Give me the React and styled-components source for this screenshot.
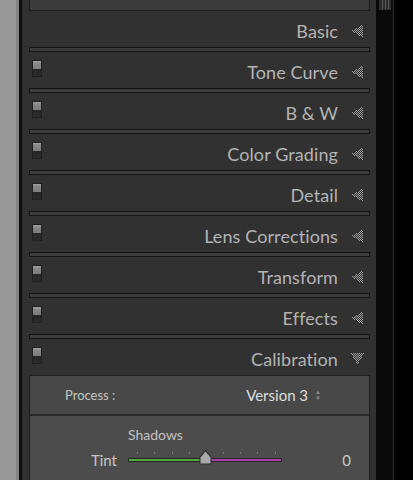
import React from 'react';
import styled, { createGlobalStyle } from 'styled-components';

const GlobalStyle = createGlobalStyle`
    html, body {
        margin: 0;
        padding: 0;
        background: #000;
    }
    body {
        font-family: Lato, "Open Sans", sans-serif;
    }
`

const Screen = styled.div`
    display: flex;
    width: 413px;
    height: 480px;
    overflow: hidden;
    background: #000;
`

const Gutter = styled.div`
    width: 16px;
    flex: none;
    background: #989898;
`

const GutterShade = styled.div`
    width: 3px;
    flex: none;
    background: #858585;
`

const GutterEdge = styled.div`
    width: 3px;
    flex: none;
    background: #0e0e0e;
`

const Panel = styled.div`
    width: 354px;
    flex: none;
    background: #313131;
    padding: 0 6px 0 7px;
    box-sizing: border-box;
    display: flex;
    flex-direction: column;
`

const TopBox = styled.div`
    height: 11px;
    flex: none;
    box-sizing: border-box;
    background: #3b3b3b;
    border: 1px solid #1b1b1b;
    border-top: none;
`

const Header = styled.div`
    height: 36px;
    flex: none;
    display: flex;
    align-items: center;
    position: relative;
    padding: 4px 6px 0 3px;
    box-sizing: border-box;
`

const Switch = styled.div`
    position: absolute;
    left: 3px;
    top: 8px;
    width: 10px;
    height: 17px;
    box-sizing: border-box;
    border: 1px solid #1f1f1f;
    background: linear-gradient(#a3a3a3 0, #8a8a8a 2px, #7c7c7c 8px, #262626 8px, #2b2b2b 100%);
`

const Title = styled.div`
    margin-left: auto;
    margin-right: 13px;
    font-size: 18px;
    color: #b4b4b4;
    letter-spacing: 0.1px;
`

const Groove = styled.div`
    height: 5px;
    flex: none;
    box-sizing: border-box;
    border: 1px solid #151515;
    background: #3c3c3c;
    border-top-color: #121212;
`

const Content = styled.div`
    flex: 1;
    box-sizing: border-box;
    border: 1px solid #1e1e1e;
    border-bottom: none;
    background: #4c4c4c;
    display: flex;
    flex-direction: column;
`

const ProcessRow = styled.div`
    height: 38px;
    flex: none;
    display: flex;
    align-items: center;
    padding: 0 0 0 35px;
    background: #484848;
    border-bottom: 2px solid #2a2a2a;
`

const Label = styled.div`
    font-size: 13px;
    color: #c4c4c4;
`

const Version = styled.div`
    margin-left: auto;
    display: flex;
    align-items: center;
    gap: 7px;
    margin-right: 48px;
    font-size: 15px;
    color: #dedede;
`

const Stepper = styled.span`
    display: flex;
    flex-direction: column;
    align-items: center;
    font-size: 6px;
    line-height: 6px;
    color: #8a8a8a;
`

const Group = styled.div`
    display: flex;
    flex-direction: column;
    padding-top: 10px;
`

const GroupTitle = styled.div`
    font-size: 14px;
    color: #c2c2c2;
    padding-left: 98px;
    height: 18px;
`

const SliderRow = styled.div`
    display: flex;
    align-items: center;
    height: 32px;
`

const SliderLabel = styled.div`
    width: 87px;
    text-align: right;
    font-size: 15px;
    color: #c6c6c6;
`

const Track = styled.div`
    position: relative;
    margin-left: 11px;
    width: 154px;
    height: 4px;
    box-sizing: border-box;
    border: 1px solid #262626;
    background: linear-gradient(90deg, #4fae3b 0, #4fae3b 50%, #b03fae 50%, #b03fae 100%);
`

const Tick = styled.span`
    position: absolute;
    top: -7px;
    width: 1px;
    height: 2px;
    background: #7a7a7a;
`

const Thumb = styled.svg`
    position: absolute;
    left: 69px;
    top: -10px;
`

const Value = styled.div`
    margin-left: auto;
    margin-right: 18px;
    font-size: 15px;
    color: #c6c6c6;
`

const Track2 = styled.div`
    width: 17px;
    flex: none;
    background: #0a0a0a;
`

const ScrollThumb = styled.div`
    margin: 0 2px 0 3px;
    height: 9px;
    background: repeating-linear-gradient(90deg, #2a2a2a 0, #2a2a2a 2px, #5a5a5a 2px, #5a5a5a 3px);
    border: 1px solid #2f2f2f;
    border-top: none;
`

const EdgeLine = styled.div`
    width: 1px;
    flex: none;
    background: #2e2e2e;
`

const Blank = styled.div`
    flex: 1;
    background: #000;
`

function dotsLeft() {
    const out = [];
    for (let x = 0; x < 12; x++) {
        for (let y = 0; y < 12; y++) {
            const half = (x / 11) * 6;
            if (Math.abs(y - 5.5) <= half + 0.2 && (x + y) % 2 === 0) {
                out.push(<rect key={x + '-' + y} x={x} y={y} width="1" height="1" />);
            }
        }
    }
    return out;
}

function dotsDown() {
    const out = [];
    for (let y = 0; y < 12; y++) {
        for (let x = 0; x < 13; x++) {
            const half = ((11 - y) / 11) * 6.5;
            if (Math.abs(x - 6) <= half + 0.2 && (x + y) % 2 === 0) {
                out.push(<rect key={x + '-' + y} x={x} y={y} width="1" height="1" />);
            }
        }
    }
    return out;
}

function Arrow({ open }) {
    return (
        <svg width="13" height="12" viewBox="0 0 13 12" fill="#9a9a9a" shapeRendering="crispEdges">
            {open ? dotsDown() : dotsLeft()}
        </svg>
    );
}

const sections = ['Basic', 'Tone Curve', 'B & W', 'Color Grading', 'Detail', 'Lens Corrections', 'Transform', 'Effects'];

const ticks = [8, 25, 43, 60, 77, 94, 111, 128, 146];

export default function App() {
    return (
        <Screen>
            <GlobalStyle />
            <Gutter />
            <GutterShade />
            <GutterEdge />
            <Panel>
                <TopBox />
                {sections.map((name, i) =>
                    <React.Fragment key={name}>
                        <Header>
                            {i > 0 && <Switch />}
                            <Title>{name}</Title>
                            <Arrow />
                        </Header>
                        <Groove />
                    </React.Fragment>
                )}
                <Header>
                    <Switch />
                    <Title>Calibration</Title>
                    <Arrow open />
                </Header>
                <Content>
                    <ProcessRow>
                        <Label>Process :</Label>
                        <Version>
                            Version 3
                            <Stepper><span>▲</span><span>▼</span></Stepper>
                        </Version>
                    </ProcessRow>
                    <Group>
                        <GroupTitle>Shadows</GroupTitle>
                        <SliderRow>
                            <SliderLabel>Tint</SliderLabel>
                            <Track>
                                {ticks.map(t => <Tick key={t} style={{ left: t }} />)}
                                <Thumb width="15" height="17" viewBox="0 0 15 17">
                                    <path d="M7.5 1 L13.5 8 L13.5 15.5 L1.5 15.5 L1.5 8 Z" fill="#2a2a2a" />
                                    <path d="M7.5 2.5 L12.5 8.5 L12.5 14.5 L2.5 14.5 L2.5 8.5 Z" fill="#a9a9a9" />
                                </Thumb>
                            </Track>
                            <Value>0</Value>
                        </SliderRow>
                    </Group>
                </Content>
            </Panel>
            <Track2>
                <ScrollThumb />
            </Track2>
            <EdgeLine />
            <Blank />
        </Screen>
    );
}
